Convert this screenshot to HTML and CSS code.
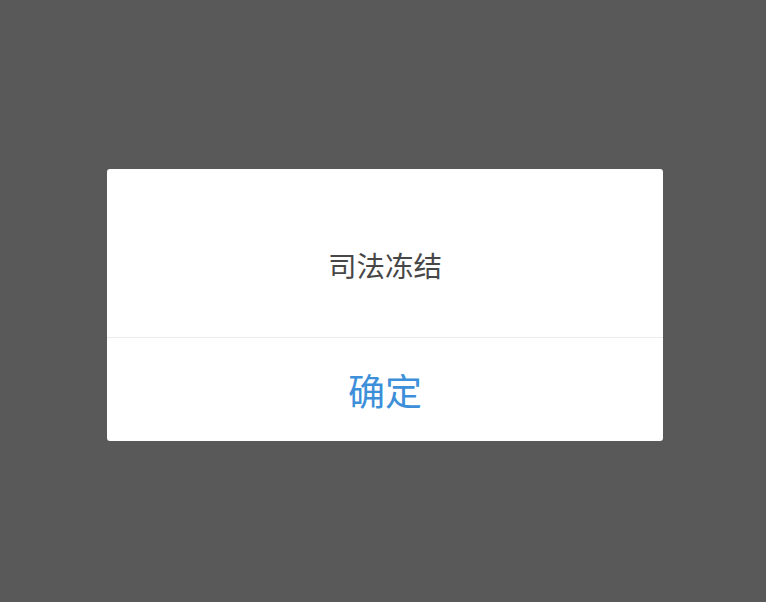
FILE: index.html
```html
<!DOCTYPE html>
<html lang="zh">
<head>
<meta charset="utf-8">
<link rel="stylesheet" href="styles.css">
</head>
<body>
<div class="overlay">
  <div class="dialog">
    <div class="dialog-body">司法冻结</div>
    <div class="dialog-footer">确定</div>
  </div>
</div>
</body>
</html>
```
FILE: styles.css
```css
html, body {
  margin: 0;
  padding: 0;
  background: #595959;
}
.overlay {
  width: 766px;
  height: 602px;
  padding-top: 169px;
  box-sizing: border-box;
  font-family: "Noto Sans CJK SC", sans-serif;
}
.dialog {
  width: 556px;
  margin-left: 107px;
  background: #ffffff;
  border-radius: 3px;
}
.dialog-body {
  box-sizing: border-box;
  height: 169px;
  padding-top: 76px;
  line-height: 40px;
  text-align: center;
  font-size: 28.5px;
  color: #474747;
  border-bottom: 1px solid #ececec;
}
.dialog-footer {
  box-sizing: border-box;
  height: 103px;
  padding-top: 32px;
  line-height: 40px;
  text-align: center;
  font-size: 37px;
  color: #3d8fd9;
}
```
